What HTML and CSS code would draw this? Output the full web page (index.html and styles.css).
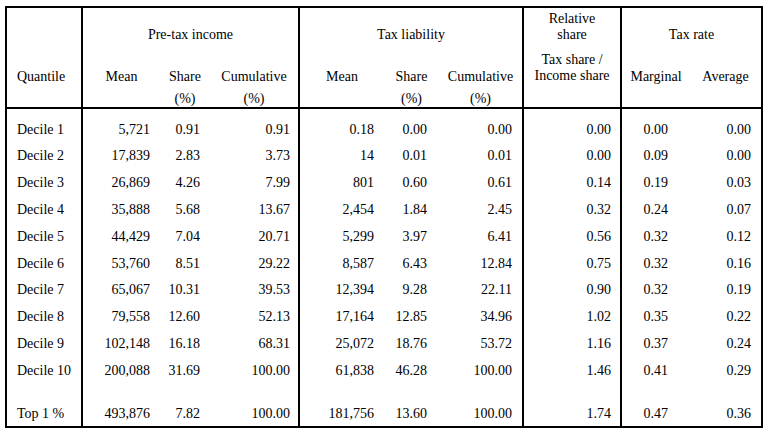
FILE: index.html
```html
<!DOCTYPE html>
<html>
<head>
<meta charset="utf-8">
<link rel="stylesheet" href="styles.css">
</head>
<body>
<div class="page">
<table class="tbl">
<colgroup>
<col class="c-q"><col class="c-pm"><col class="c-ps"><col class="c-pc"><col class="c-tm"><col class="c-ts"><col class="c-tc"><col class="c-rel"><col class="c-mar"><col class="c-avg">
</colgroup>
<thead>
<tr class="grp">
<th class="q"></th>
<th colspan="3" class="g">Pre-tax income</th>
<th colspan="3" class="g">Tax liability</th>
<th class="g">Relative<br>share</th>
<th colspan="2" class="g">Tax rate</th>
</tr>
<tr class="sub">
<th class="q">Quantile</th>
<th>Mean</th>
<th>Share<span class="pct">(%)</span></th>
<th>Cumulative<span class="pct">(%)</span></th>
<th class="g">Mean</th>
<th>Share<span class="pct">(%)</span></th>
<th>Cumulative<span class="pct">(%)</span></th>
<th class="g rel">Tax share /<br>Income share</th>
<th class="g">Marginal</th>
<th>Average</th>
</tr>
</thead>
<tbody>
<tr class="first"><td class="q">Decile 1</td><td class="pm">5,721</td><td class="ps">0.91</td><td class="pc">0.91</td><td class="tm g">0.18</td><td class="ts">0.00</td><td class="tc">0.00</td><td class="rl g">0.00</td><td class="mr g">0.00</td><td class="av">0.00</td></tr>
<tr><td class="q">Decile 2</td><td class="pm">17,839</td><td class="ps">2.83</td><td class="pc">3.73</td><td class="tm g">14</td><td class="ts">0.01</td><td class="tc">0.01</td><td class="rl g">0.00</td><td class="mr g">0.09</td><td class="av">0.00</td></tr>
<tr><td class="q">Decile 3</td><td class="pm">26,869</td><td class="ps">4.26</td><td class="pc">7.99</td><td class="tm g">801</td><td class="ts">0.60</td><td class="tc">0.61</td><td class="rl g">0.14</td><td class="mr g">0.19</td><td class="av">0.03</td></tr>
<tr><td class="q">Decile 4</td><td class="pm">35,888</td><td class="ps">5.68</td><td class="pc">13.67</td><td class="tm g">2,454</td><td class="ts">1.84</td><td class="tc">2.45</td><td class="rl g">0.32</td><td class="mr g">0.24</td><td class="av">0.07</td></tr>
<tr><td class="q">Decile 5</td><td class="pm">44,429</td><td class="ps">7.04</td><td class="pc">20.71</td><td class="tm g">5,299</td><td class="ts">3.97</td><td class="tc">6.41</td><td class="rl g">0.56</td><td class="mr g">0.32</td><td class="av">0.12</td></tr>
<tr><td class="q">Decile 6</td><td class="pm">53,760</td><td class="ps">8.51</td><td class="pc">29.22</td><td class="tm g">8,587</td><td class="ts">6.43</td><td class="tc">12.84</td><td class="rl g">0.75</td><td class="mr g">0.32</td><td class="av">0.16</td></tr>
<tr><td class="q">Decile 7</td><td class="pm">65,067</td><td class="ps">10.31</td><td class="pc">39.53</td><td class="tm g">12,394</td><td class="ts">9.28</td><td class="tc">22.11</td><td class="rl g">0.90</td><td class="mr g">0.32</td><td class="av">0.19</td></tr>
<tr><td class="q">Decile 8</td><td class="pm">79,558</td><td class="ps">12.60</td><td class="pc">52.13</td><td class="tm g">17,164</td><td class="ts">12.85</td><td class="tc">34.96</td><td class="rl g">1.02</td><td class="mr g">0.35</td><td class="av">0.22</td></tr>
<tr><td class="q">Decile 9</td><td class="pm">102,148</td><td class="ps">16.18</td><td class="pc">68.31</td><td class="tm g">25,072</td><td class="ts">18.76</td><td class="tc">53.72</td><td class="rl g">1.16</td><td class="mr g">0.37</td><td class="av">0.24</td></tr>
<tr><td class="q">Decile 10</td><td class="pm">200,088</td><td class="ps">31.69</td><td class="pc">100.00</td><td class="tm g">61,838</td><td class="ts">46.28</td><td class="tc">100.00</td><td class="rl g">1.46</td><td class="mr g">0.41</td><td class="av">0.29</td></tr>
<tr class="top"><td class="q">Top 1 %</td><td class="pm">493,876</td><td class="ps">7.82</td><td class="pc">100.00</td><td class="tm g">181,756</td><td class="ts">13.60</td><td class="tc">100.00</td><td class="rl g">1.74</td><td class="mr g">0.47</td><td class="av">0.36</td></tr>
</tbody>
</table>
</div>
</body>
</html>
```

FILE: styles.css
```css
html, body {
  margin: 0;
  padding: 0;
  background: #ffffff;
}

body {
  font-family: "Liberation Serif", "Times New Roman", serif;
  font-size: 14px;
  color: #000000;
}

.page {
  padding: 6px 0 0 5px;
}

.tbl {
  border-collapse: collapse;
  table-layout: fixed;
  width: 758px;
  border: 2px solid #000000;
}

.c-q { width: 76px; }
.c-pm { width: 78px; }
.c-ps { width: 50px; }
.c-pc { width: 89px; }
.c-tm { width: 85px; }
.c-ts { width: 55px; }
.c-tc { width: 84px; }
.c-rel { width: 98px; }
.c-mar { width: 69px; }
.c-avg { width: 72px; }

.tbl th,
.tbl td {
  padding: 0;
  font-weight: normal;
  white-space: nowrap;
}

.tbl .q {
  border-right: 2px solid #000000;
  text-align: left;
  padding-left: 10px;
}

.tbl .g {
  border-left: 2px solid #000000;
}

.grp {
  height: 44px;
}

.grp th {
  vertical-align: bottom;
  line-height: 16px;
  padding-bottom: 8px;
  text-align: center;
}

.sub {
  height: 55px;
}

.sub th {
  vertical-align: top;
  line-height: 16px;
  padding-top: 18px;
  text-align: center;
  border-bottom: 2px solid #000000;
}

.sub th.rel {
  padding-top: 1px;
}

.pct {
  display: block;
  margin-top: 6px;
}

.tbl td {
  line-height: 26.8px;
  text-align: right;
  vertical-align: top;
}

.first td {
  padding-top: 7.6px;
}

.top td {
  padding-top: 17.6px;
  line-height: 24px;
}

.tbl td.pm { padding-right: 10px; }
.tbl td.ps { padding-right: 10px; }
.tbl td.pc { padding-right: 8px; }
.tbl td.tm { padding-right: 10px; }
.tbl td.ts { padding-right: 12px; }
.tbl td.tc { padding-right: 10px; }
.tbl td.rl { padding-right: 9px; }
.tbl td.mr { padding-right: 22px; }
.tbl td.av { padding-right: 10px; }
```
